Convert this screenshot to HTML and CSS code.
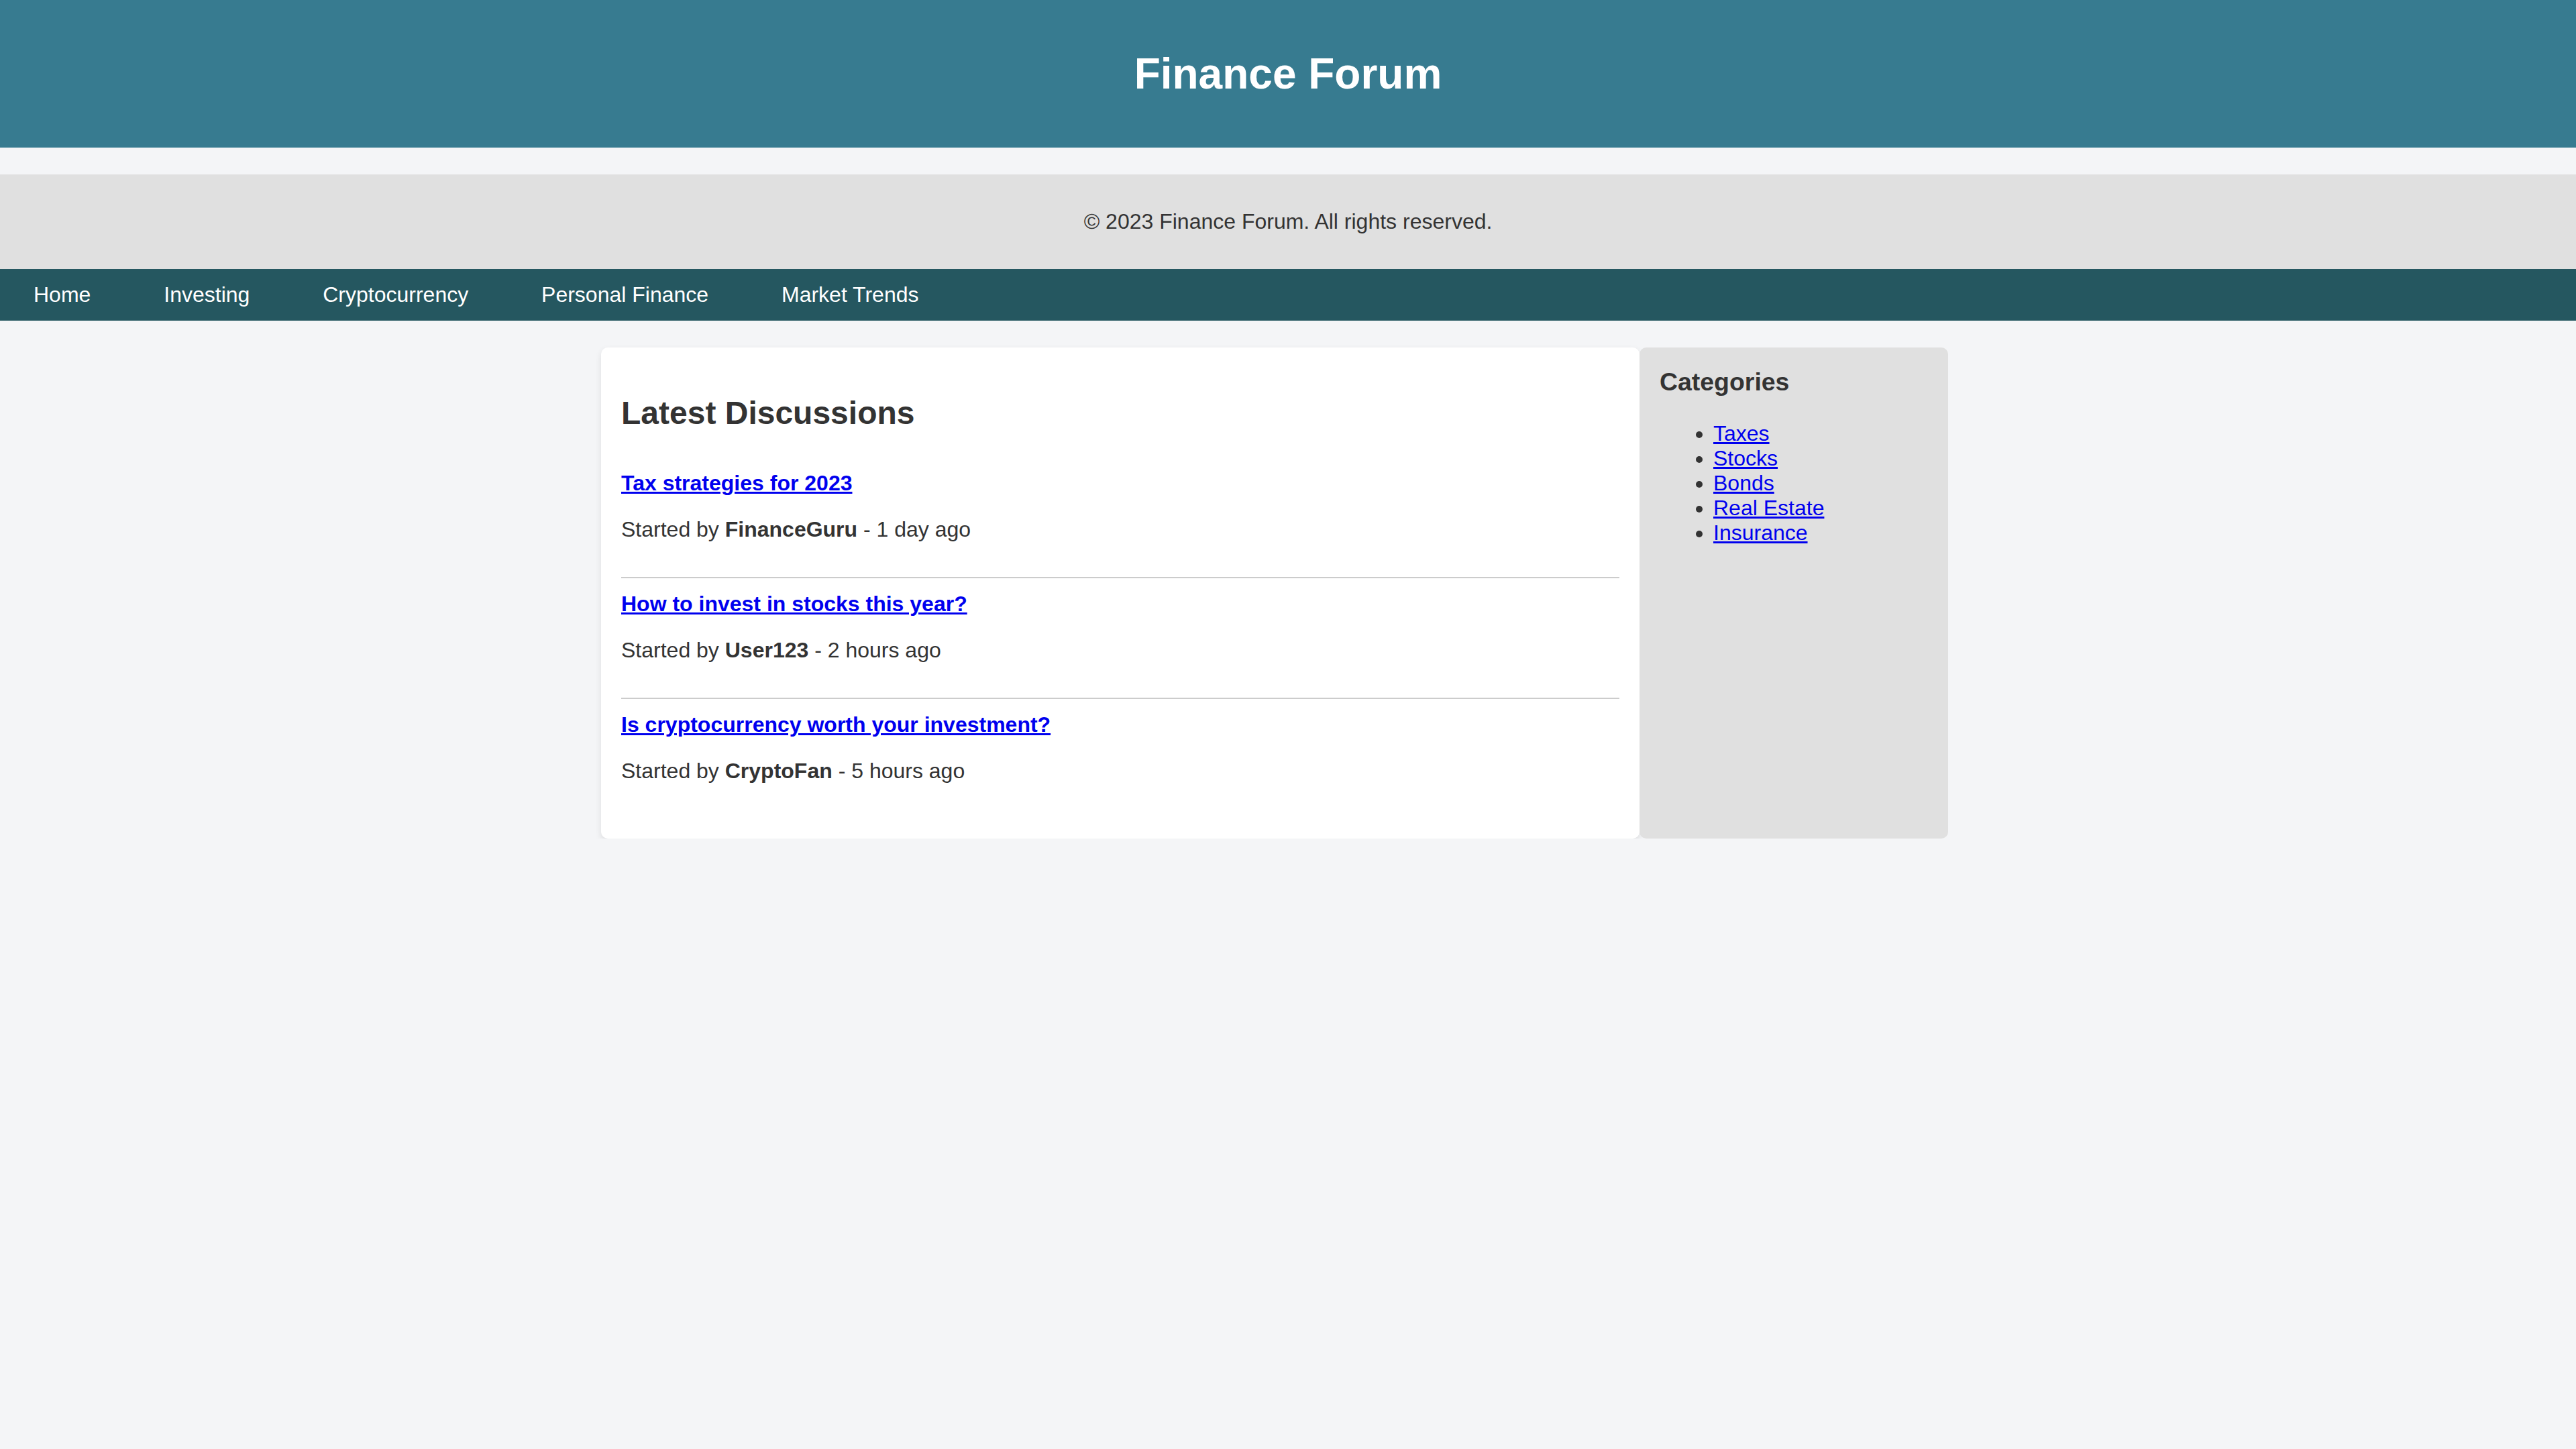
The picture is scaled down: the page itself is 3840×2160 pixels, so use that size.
FILE: index.html
```html
<!DOCTYPE html>
<html lang="en">
<head>
<meta charset="utf-8">
<title>Finance Forum</title>
<link rel="stylesheet" href="styles.css">
</head>
<body>
<header class="site-header">
  <h1>Finance Forum</h1>
</header>
<footer class="site-footer">
  <p>&copy; 2023 Finance Forum. All rights reserved.</p>
</footer>
<nav class="site-nav">
  <ul>
    <li><a href="#">Home</a></li>
    <li><a href="#">Investing</a></li>
    <li><a href="#">Cryptocurrency</a></li>
    <li><a href="#">Personal Finance</a></li>
    <li><a href="#">Market Trends</a></li>
  </ul>
</nav>
<div class="container">
  <main class="discussions">
    <h2>Latest Discussions</h2>
    <div class="thread">
      <h3><a href="#">Tax strategies for 2023</a></h3>
      <p>Started by <strong>FinanceGuru</strong> - 1 day ago</p>
    </div>
    <div class="thread">
      <h3><a href="#">How to invest in stocks this year?</a></h3>
      <p>Started by <strong>User123</strong> - 2 hours ago</p>
    </div>
    <div class="thread">
      <h3><a href="#">Is cryptocurrency worth your investment?</a></h3>
      <p>Started by <strong>CryptoFan</strong> - 5 hours ago</p>
    </div>
  </main>
  <aside class="sidebar">
    <h3>Categories</h3>
    <ul>
      <li><a href="#">Taxes</a></li>
      <li><a href="#">Stocks</a></li>
      <li><a href="#">Bonds</a></li>
      <li><a href="#">Real Estate</a></li>
      <li><a href="#">Insurance</a></li>
    </ul>
  </aside>
</div>
</body>
</html>
```
FILE: styles.css
```css
html, body {
  margin: 0;
  padding: 0;
}
body {
  background: #f4f5f7;
  color: #333333;
  font-family: "Liberation Sans", Arial, sans-serif;
  font-size: 32px;
  line-height: normal;
}
.site-header {
  background: #377b90;
  color: #ffffff;
  text-align: center;
  padding: 30px;
  margin-bottom: 40px;
}
.site-header h1 {
  font-size: 64px;
  margin: 42.88px 0;
}
.site-footer {
  background: #e0e0e0;
  text-align: center;
  padding: 20px;
}
.site-footer p {
  margin: 32px 0;
}
.site-nav {
  background: #255760;
}
.site-nav ul {
  list-style: none;
  margin: 0;
  padding: 0;
}
.site-nav li {
  display: inline;
}
.site-nav a {
  display: inline-block;
  padding: 20px 50px;
  color: #ffffff;
  text-decoration: none;
}
.container {
  width: 2048px;
  margin: 40px auto 0;
  display: grid;
  grid-template-columns: 1548px 460px;
  align-items: stretch;
}
.discussions {
  background: #ffffff;
  padding: 30px;
  border-radius: 10px;
  box-shadow: 0 4px 10px rgba(0, 0, 0, 0.1);
}
.discussions h2 {
  font-size: 48px;
  margin: 39.84px 0;
}
.thread {
  padding: 20px 0;
  border-bottom: 2px solid #cccccc;
}
.thread:last-child {
  border-bottom: none;
}
.thread h3 {
  font-size: 32px;
  margin: 0;
}
.thread h3 a {
  color: #0000ee;
}
.thread p {
  margin: 32px 0;
}
.sidebar {
  background: #e0e0e0;
  padding: 30px;
  border-radius: 10px;
}
.sidebar h3 {
  font-size: 37.44px;
  margin: 0 0 37.44px;
}
.sidebar ul {
  margin: 32px 0;
  padding-left: 80px;
}
.sidebar a {
  color: #0000ee;
}
```
